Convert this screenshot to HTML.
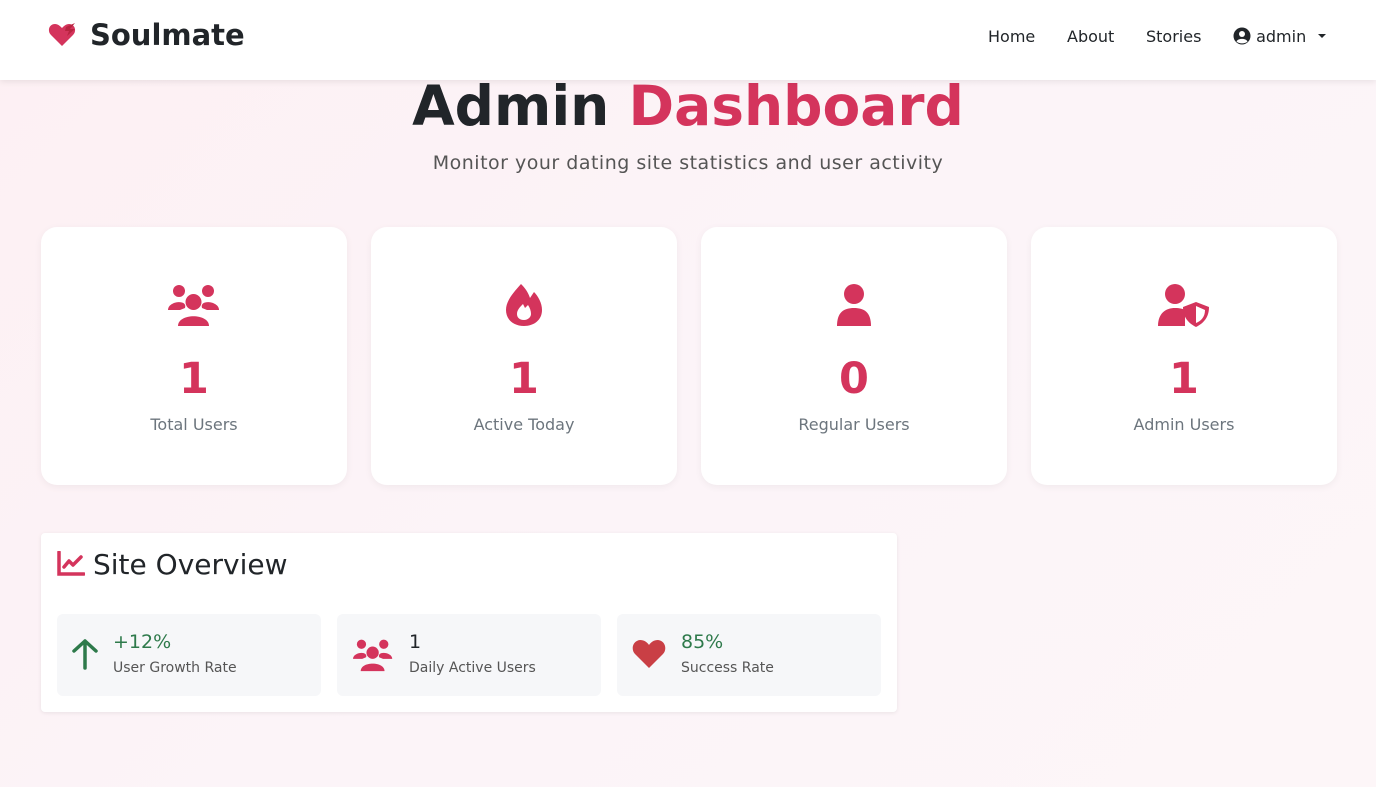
<!DOCTYPE html>
<html><head><meta charset="utf-8"><style>
*{box-sizing:border-box;margin:0;padding:0}
body{width:1376px;height:787px;overflow:hidden;font-family:"DejaVu Sans",sans-serif;background:linear-gradient(135deg,#fdf0f3 0%,#fcf4f8 50%,#fdf6f8 100%);color:#212529;position:relative}
nav{position:absolute;left:0;top:0;width:1376px;height:80px;background:#fff;box-shadow:0 2px 6px rgba(0,0,0,.08);z-index:2}
.brand{position:absolute;left:48px;top:18px;display:flex;align-items:center;font-weight:bold;font-size:29px;color:#212529}
.brand svg{margin-right:14px}
.links{position:absolute;top:27px;font-size:16px;color:#212529}
h1{position:absolute;top:74px;width:1376px;text-align:center;font-size:55px;font-weight:bold;color:#212529}
h1 span{color:#d4345c}
.sub{position:absolute;top:152px;width:1376px;text-align:center;font-size:19px;color:#555;letter-spacing:.5px}
.card{position:absolute;top:227px;width:306px;height:258px;background:#fff;border-radius:16px;box-shadow:0 2px 8px rgba(0,0,0,.05);text-align:center}
.card svg{position:absolute;left:50%;transform:translateX(-50%);top:56px}
.card .n{position:absolute;top:127px;width:100%;font-size:43px;font-weight:bold;color:#d4345c}
.card .l{position:absolute;top:188px;width:100%;font-size:16px;color:#6c757d}
.ov{position:absolute;left:41px;top:533px;width:856px;height:179px;background:#fff;border-radius:4px;box-shadow:0 1px 4px rgba(0,0,0,.08)}
.ov h2{position:absolute;left:52px;top:15px;font-size:28px;font-weight:normal}
.st{position:absolute;top:81px;width:264px;height:82px;background:#f6f7f9;border-radius:6px}
.st .v{position:absolute;top:17px;font-size:19px}
.st .t{position:absolute;top:46px;font-size:14px;color:#555}
</style></head><body>
<nav>
<div class="brand"><svg width="28" height="24" viewBox="0 0 28 24"><path d="M14 23 L3 12 C-1 8 1 1 7 1 C10 1 12 3 14 5 C16 3 18 1 21 1 C27 1 29 8 25 12 Z" fill="#d4345c"/><path d="M18 4 L27 0 L22 6 L27 6 L19 13 L21 8 L17 8Z" fill="#b8243f"/></svg>Soulmate</div>
<div class="links" style="left:988px">Home</div>
<div class="links" style="left:1067px">About</div>
<div class="links" style="left:1146px">Stories</div>
<div class="links" style="left:1233px"><svg width="18" height="18" viewBox="0 0 18 18" style="vertical-align:-3px"><circle cx="9" cy="9" r="8.5" fill="#212529"/><circle cx="9" cy="7" r="3" fill="#fff"/><path d="M3.5 14.5 C5 11 13 11 14.5 14.5 C12 17 6 17 3.5 14.5Z" fill="#fff"/></svg> admin <svg width="10" height="6" viewBox="0 0 10 6" style="vertical-align:3px;margin-left:6px"><path d="M1 1 L5 5 L9 1Z" fill="#212529"/></svg></div>
</nav>
<h1>Admin <span>Dashboard</span></h1>
<div class="sub">Monitor your dating site statistics and user activity</div>

<div class="card" style="left:41px"><svg width="52" height="44" viewBox="0 0 52 44"><circle cx="11" cy="8" r="6" fill="#d4345c"/><circle cx="40" cy="8" r="6" fill="#d4345c"/><circle cx="25.5" cy="19" r="8" fill="#d4345c"/><path d="M0 27 C0 18 20 16 17 25 L12 27Z" fill="#d4345c"/><path d="M51 27 C51 18 31 16 34 25 L39 27Z" fill="#d4345c"/><path d="M10 43 C10 30 41 30 41 43Z" fill="#d4345c"/></svg><div class="n">1</div><div class="l">Total Users</div></div>
<div class="card" style="left:371px"><svg width="38" height="44" viewBox="0 0 38 44"><path d="M16 1 C8 10 1 18 1 27 C1 37 9 43 19 43 C29 43 37 37 37 27 C37 20 33 13 29 9 L25 15 C23 9 20 5 16 1Z" fill="#d4345c"/><path d="M19 37 C14 37 12 34 12 31 C12 27 15 24 18 21 L20 25 L23 22 C25 25 26 28 26 31 C26 34 23 37 19 37Z" fill="#fff"/></svg><div class="n">1</div><div class="l">Active Today</div></div>
<div class="card" style="left:701px"><svg width="36" height="44" viewBox="0 0 36 44"><circle cx="18" cy="11" r="10" fill="#d4345c"/><path d="M1 43 C1 29 8 25 18 25 C28 25 35 29 35 43Z" fill="#d4345c"/></svg><div class="n">0</div><div class="l">Regular Users</div></div>
<div class="card" style="left:1031px"><svg width="52" height="44" viewBox="0 0 52 44"><circle cx="17" cy="11" r="10" fill="#d4345c"/><path d="M0 43 C0 30 8 25 17 25 C22 25 25 26 27 27 L27 43Z" fill="#d4345c"/><path d="M38 19 L51 24 C51 34 46 40 38 44 C30 40 25 34 25 24Z" fill="#d4345c"/><path d="M38 23 L47 27 C47 34 43 38 38 40Z" fill="#fff"/></svg><div class="n">1</div><div class="l">Admin Users</div></div>

<div class="ov">
<svg style="position:absolute;left:16px;top:18px" width="28" height="26" viewBox="0 0 28 26"><path d="M2 1 V23 H27" stroke="#d4345c" stroke-width="3.5" fill="none" stroke-linecap="round"/><path d="M7 16 L12 10 L16 14 L24 6" stroke="#d4345c" stroke-width="3.5" fill="none" stroke-linecap="round" stroke-linejoin="round"/></svg>
<h2>Site Overview</h2>
<div class="st" style="left:16px"><svg style="position:absolute;left:15px;top:24px" width="26" height="32" viewBox="0 0 26 32"><path d="M13 30 V3 M2 13 L13 3 L24 13" stroke="#2e7a4b" stroke-width="3.5" fill="none" stroke-linecap="round" stroke-linejoin="round"/></svg><div class="v" style="left:56px;color:#2e7a4b">+12%</div><div class="t" style="left:56px">User Growth Rate</div></div>
<div class="st" style="left:296px"><svg style="position:absolute;left:16px;top:24px" width="40" height="34" viewBox="0 0 52 44"><circle cx="11" cy="8" r="6" fill="#d4345c"/><circle cx="40" cy="8" r="6" fill="#d4345c"/><circle cx="25.5" cy="19" r="8" fill="#d4345c"/><path d="M0 27 C0 18 20 16 17 25 L12 27Z" fill="#d4345c"/><path d="M51 27 C51 18 31 16 34 25 L39 27Z" fill="#d4345c"/><path d="M10 43 C10 30 41 30 41 43Z" fill="#d4345c"/></svg><div class="v" style="left:72px">1</div><div class="t" style="left:72px">Daily Active Users</div></div>
<div class="st" style="left:576px"><svg style="position:absolute;left:15px;top:25px" width="34" height="30" viewBox="0 0 34 30"><path d="M17 29 L3 15 C-1 11 0 2 8 1 C12 1 15 3 17 6 C19 3 22 1 26 1 C34 2 35 11 31 15 Z" fill="#c93f45"/></svg><div class="v" style="left:64px;color:#2e7a4b">85%</div><div class="t" style="left:64px">Success Rate</div></div>
</div>
</body></html>
